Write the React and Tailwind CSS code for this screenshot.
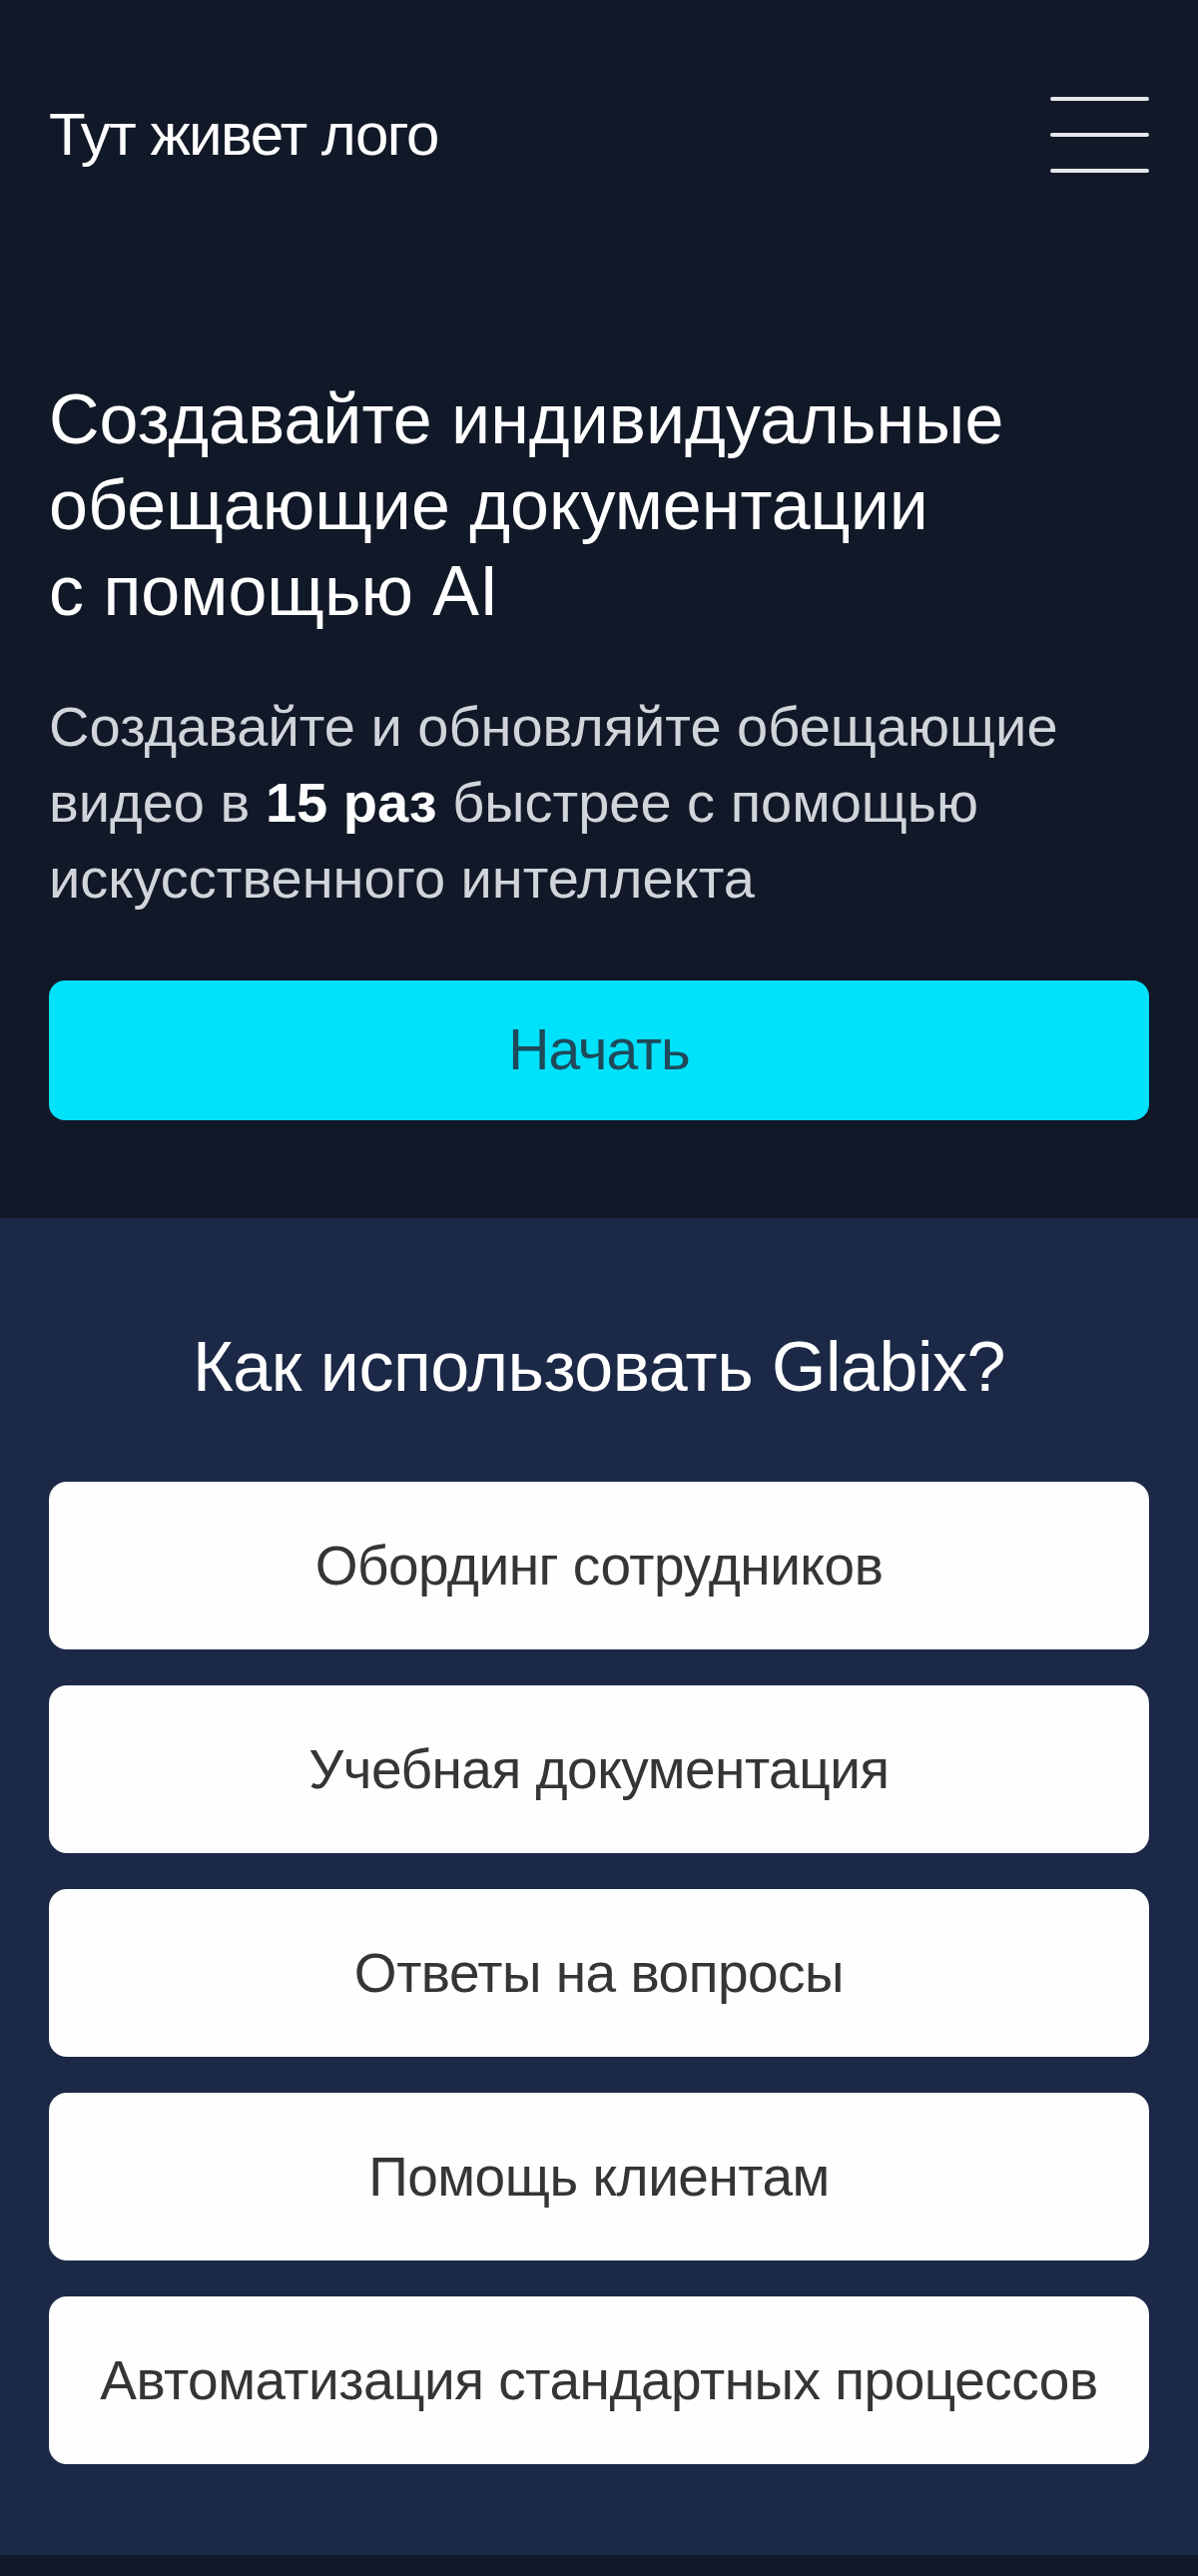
const uses = [
  "Обординг сотрудников",
  "Учебная документация",
  "Ответы на вопросы",
  "Помощь клиентам",
  "Автоматизация стандартных процессов",
];

function Burger() {
  return (
    <button className="flex flex-col gap-[32px] w-[99px]" aria-label="Меню">
      <span className="block h-[4px] w-full bg-gray-200 rounded-sm" />
      <span className="block h-[4px] w-full bg-gray-200 rounded-sm" />
      <span className="block h-[4px] w-full bg-gray-200 rounded-sm" />
    </button>
  );
}

export default function App() {
  return (
    <div className="min-h-screen bg-[#111827] font-['Liberation_Sans',Arial,sans-serif]">
      <main className="bg-[#111827] px-[49px] pb-[98px]">
        <header className="flex items-center justify-between h-[270px]">
          <span className="text-white text-[60px] tracking-[-1.5px]">Тут живет лого</span>
          <Burger />
        </header>
        <h1 className="mt-[107px] text-white text-[70px] leading-[86px]">
          Создавайте индивидуальные
          <br />
          обещающие документации
          <br />с помощью AI
        </h1>
        <p className="mt-[55px] text-[#d1d5db] text-[56px] leading-[76px]">
          Создавайте и обновляйте обещающие видео в{" "}
          <b className="text-white">15 раз</b> быстрее с помощью искусственного
          интеллекта
        </p>
        <button className="mt-[64px] w-full h-[140px] rounded-[16px] bg-[#00e1fa] text-[#1e4a5a] text-[57px] tracking-[-1px]">
          Начать
        </button>
      </main>
      <section className="bg-[#1b2846] px-[49px] pt-[111px] pb-[91px]">
        <h2 className="text-center text-white text-[70px] leading-[76px] tracking-[-0.5px]">
          Как использовать Glabix?
        </h2>
        <ul className="mt-[77px] flex flex-col gap-[36px]">
          {uses.map((item) => (
            <li
              key={item}
              className="h-[168px] flex items-center justify-center rounded-[18px] bg-[#fefefe] text-[#353535] text-[55px] tracking-[-0.5px]"
            >
              {item}
            </li>
          ))}
        </ul>
      </section>
    </div>
  );
}
